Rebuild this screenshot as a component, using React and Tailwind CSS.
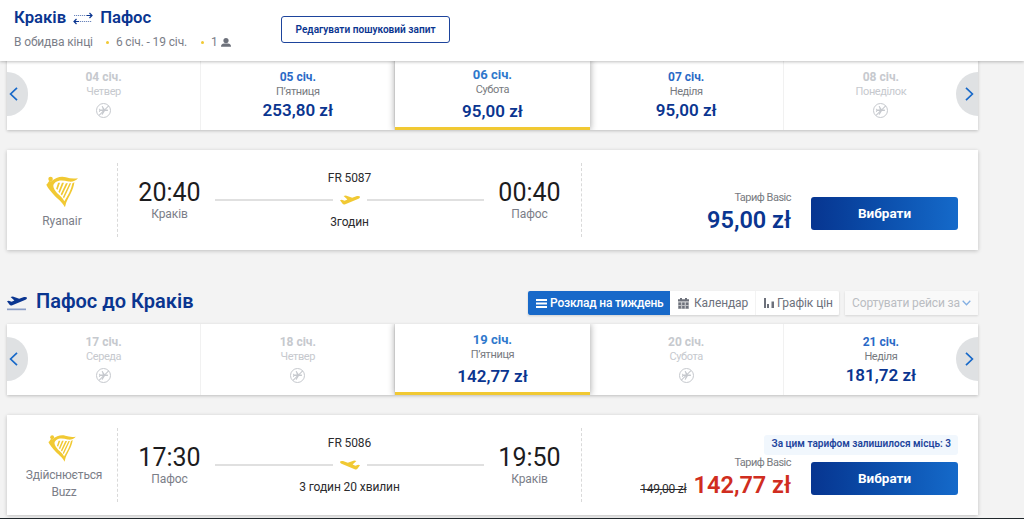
import React from 'react';
import clsx from 'clsx';
import { MdFlight } from 'react-icons/md';

const outboundDays = [
  { date: '04 січ.', day: 'Четвер' },
  { date: '05 січ.', day: 'П’ятниця', price: '253,80 zł' },
  { date: '06 січ.', day: 'Субота', price: '95,00 zł', selected: true },
  { date: '07 січ.', day: 'Неділя', price: '95,00 zł' },
  { date: '08 січ.', day: 'Понеділок' }
];

const returnDays = [
  { date: '17 січ.', day: 'Середа' },
  { date: '18 січ.', day: 'Четвер' },
  { date: '19 січ.', day: 'П’ятниця', price: '142,77 zł', selected: true },
  { date: '20 січ.', day: 'Субота' },
  { date: '21 січ.', day: 'Неділя', price: '181,72 zł' }
];

const outboundFlight = {
  carrier: ['Ryanair'],
  number: 'FR 5087',
  duration: '3годин',
  from: { time: '20:40', city: 'Краків' },
  to: { time: '00:40', city: 'Пафос' },
  price: '95,00 zł'
};

const returnFlight = {
  carrier: ['Здійснюється', 'Buzz'],
  number: 'FR 5086',
  duration: '3 годин 20 хвилин',
  from: { time: '17:30', city: 'Пафос' },
  to: { time: '19:50', city: 'Краків' },
  price: '142,77 zł',
  oldPrice: '149,00 zł',
  notice: 'За цим тарифом залишилося місць: 3',
  inbound: true
};

const HarpLogo = ({ className }) => (
  <svg viewBox="30 33 98 96" className={className} fill="#f1c933">
    <circle cx="44" cy="41" r="7" />
    <path d="M46 48 C59 37 76 31 91 36 C103 40 115 41 128 39 C121 47 110 51 99 49 C84 45 70 43 59 51 C52 57 50 63 56 73 C65 89 81 95 86 109 C96 94 107 75 111 54 L117 51 C114 75 101 92 92 113 L88 128 C81 111 63 101 51 86 C43 77 32 64 31 58 C35 57 36 50 40 47 Z" />
    <path d="M67 53 L73 53 L65 75 L61 71 Z M79 53 L85 53 L72 84 L68 80 Z M91 54 L97 54 L79 92 L75 88 Z M102 54 L107 54 L85 101 L82 96 Z" />
  </svg>
);

const planePath =
  'M0 5.2 L1.8 4.7 L4.6 5.8 L7.4 4.6 L3.6 1 L5.8 .4 L12.2 2.8 L17 1 Q19.4 .6 20 1.8 Q20.1 2.9 18.5 3.7 L5.3 9.2 Q3.4 9.8 2.6 8.8 Z';

const PlaneIcon = ({ inbound }) => (
  <svg viewBox="0 0 20 10" className={clsx('h-[10px] w-5', inbound && '-scale-x-100')} fill="#f1c933">
    <path d={planePath} />
  </svg>
);

const DepartureIcon = () => (
  <svg viewBox="0 0 20 15" className="h-[15px] w-5" fill="#0a3590">
    <path d={planePath} />
    <path d="M0 12.5h19v1.7H0z" opacity=".45" />
  </svg>
);

const ArrowIcon = ({ className, flip }) => (
  <svg
    viewBox="0 0 9 14"
    className={clsx('h-[14px] w-[9px] shrink-0', flip && '-scale-x-100', className)}
    fill="none"
    stroke="currentColor"
    strokeWidth="1.7"
  >
    <path d="M1 .8 L7.4 7 L1 13.2" />
  </svg>
);

const NoFlightIcon = () => (
  <span className="relative flex h-[15px] w-[15px] items-center justify-center rounded-full border border-[#c6c9ce] text-[#c6c9ce]">
    <MdFlight className="h-[11px] w-[11px] rotate-90" />
    <span className="absolute h-px w-[14px] -rotate-45 bg-[#c6c9ce]" />
  </span>
);

const RoundTripIcon = () => (
  <svg viewBox="0 0 20 13" className="h-[13px] w-5" fill="none" stroke="#0a3590">
    <path d="M1 3.5 H15" strokeDasharray="1.2 .8" strokeWidth="1" opacity=".6" />
    <path d="M5 9.5 H19" strokeDasharray="1.2 .8" strokeWidth="1" opacity=".6" />
    <path d="M14 3.5 H19 M16.5 1 L19 3.5 L16.5 6" strokeWidth="1.2" />
    <path d="M6 9.5 H1 M3.5 7 L1 9.5 L3.5 12" strokeWidth="1.2" />
  </svg>
);

const DayCell = ({ item }) => {
  const { date, day, price, selected } = item;

  return (
    <div
      className={clsx(
        'flex flex-col items-center bg-white',
        selected
          ? 'relative border-b-[3px] border-[#f1c933] pt-2 shadow-[0_0_7px_rgba(0,0,0,0.38)]'
          : 'border-r border-[#f1f1f1] pt-[10px] last:border-r-0'
      )}
    >
      <div
        className={clsx(
          'font-bold leading-4',
          !price && 'text-[12px] text-[#c6c9ce]',
          price && !selected && 'text-[12px] text-[#2a69c6]',
          selected && 'text-[13px] text-[#2f78cc]'
        )}
      >
        {date}
      </div>
      <div
        className={clsx(
          'text-[11px] leading-[14px] tracking-[-0.4px]',
          price ? 'text-[#777a80]' : 'text-[#c6c9ce]'
        )}
      >
        {day}
      </div>
      {price ? (
        <div className={clsx('text-[17px] font-semibold leading-5 text-[#0a3590]', selected ? 'mt-1' : 'mt-px')}>
          {price}
        </div>
      ) : (
        <div className="mt-1">
          <NoFlightIcon />
        </div>
      )}
    </div>
  );
};

const WeekCarousel = ({ days }) => (
  <div className="relative h-[71px] w-[971px] shadow-[0_1px_3px_rgba(0,0,0,0.22)]">
    <div className="grid h-full w-full grid-cols-5 overflow-hidden bg-white">
      {days.map((item) => (
        <DayCell key={item.date} item={item} />
      ))}
    </div>
    <button className="absolute left-0 top-[13px] flex h-11 w-[21px] items-center rounded-r-full bg-[#dfe1e3] text-[#1869c9]">
      <ArrowIcon flip className="ml-[2px]" />
    </button>
    <button className="absolute right-0 top-[13px] flex h-11 w-[22px] items-center justify-end rounded-l-full bg-[#dfe1e3] text-[#1869c9]">
      <ArrowIcon className="mr-1" />
    </button>
  </div>
);

const Stop = ({ stop }) => (
  <div className="flex w-[63px] flex-col items-center pt-[29px]">
    <div className="text-[25px] leading-[27px] text-[#1c1c1e]">{stop.time}</div>
    <div className="text-[12px] leading-[17px] tracking-[-0.1px] text-[#7b7e88]">{stop.city}</div>
  </div>
);

const FlightCard = ({ flight }) => (
  <div className="flex h-[100px] w-[971px] bg-white shadow-[0_1px_4px_rgba(0,0,0,0.22)]">
    <div className="flex w-[110px] flex-col items-center">
      <HarpLogo
        className={flight.carrier.length > 1 ? 'mb-[5px] mt-5 h-[27px] w-[28px]' : 'mb-[5px] mt-[26px] h-8 w-8'}
      />
      {flight.carrier.map((line) => (
        <div
          key={line}
          className={clsx(
            'text-[12px] leading-[17px] text-[#7b7e88]',
            flight.carrier.length > 1 && 'pl-1 tracking-[-0.2px]'
          )}
        >
          {line}
        </div>
      ))}
    </div>

    <div className="my-[13px] border-l border-dashed border-[#d9d9d9]" />

    <div className="flex w-[463px] pl-5">
      <Stop stop={flight.from} />
      <div className="mx-[14px] flex w-[269px] flex-col items-center pt-5 text-[12px] leading-4 tracking-[-0.1px] text-[#2b2b2e]">
        <div>{flight.number}</div>
        <div className="my-[6px] flex h-[15px] w-full items-center">
          <div className="h-[2px] flex-1 bg-[#e0e0e0]" />
          <div className="mx-[7px]">
            <PlaneIcon inbound={flight.inbound} />
          </div>
          <div className="h-[2px] flex-1 bg-[#e0e0e0]" />
        </div>
        <div className="mt-px">{flight.duration}</div>
      </div>
      <Stop stop={flight.to} />
    </div>

    <div className="my-[13px] border-l border-dashed border-[#d9d9d9]" />

    <div className="flex flex-1 flex-col items-end pr-5">
      <div className="mt-5 h-5">
        {flight.notice && (
          <div className="h-5 whitespace-nowrap rounded-[3px] bg-[#f1f7fd] px-[7px] text-[10.05px] font-semibold leading-[18px] text-[#1d449c]">
            {flight.notice}
          </div>
        )}
      </div>
      <div className="flex">
        <div className="mr-5 flex flex-col items-end">
          <div className="text-[11px] leading-4 tracking-[-0.5px] text-[#777a80]">Тариф Basic</div>
          <div className="flex items-baseline">
            {flight.oldPrice && (
              <span className="mr-[7px] text-[12px] tracking-[-0.2px] text-[#2b2b2e] line-through">
                {flight.oldPrice}
              </span>
            )}
            <span
              className={clsx(
                'text-[23.5px] font-semibold leading-7',
                flight.oldPrice ? 'text-[#d02d20]' : 'text-[#0a3590]'
              )}
            >
              {flight.price}
            </span>
          </div>
        </div>
        <button className="mt-[7px] h-[33px] w-[147px] rounded-[3px] bg-linear-to-r from-[#073590] to-[#156aca] pb-[2px] text-[13.5px] font-bold leading-4 text-white">
          Вибрати
        </button>
      </div>
    </div>
  </div>
);

const SearchHeader = () => (
  <header className="relative z-10 flex h-[61px] shrink-0 bg-white pl-[14px] shadow-[0_1px_3px_rgba(0,0,0,0.25)]">
    <div className="w-[267px] pt-2">
      <div className="flex h-5 items-center text-[16.7px] font-semibold text-[#0a3590]">
        <span>Краків</span>
        <span className="mx-[7px]">
          <RoundTripIcon />
        </span>
        <span>Пафос</span>
      </div>
      <div className="mt-[6px] flex h-4 items-center text-[12px] tracking-[-0.13px] text-[#7b7e88]">
        <span>В обидва кінці</span>
        <span className="ml-[13px] mr-[7px] h-[3px] w-[3px] rounded-full bg-[#f1c933]" />
        <span>6 січ. - 19 січ.</span>
        <span className="ml-[14px] mr-[7px] h-[3px] w-[3px] rounded-full bg-[#f1c933]" />
        <span>1</span>
        <svg viewBox="0 0 10 9" className="ml-[3px] h-[9px] w-[10px]" fill="#6d717b">
          <circle cx="5" cy="2.6" r="2.6" />
          <path d="M0 8.8 Q0 5.8 3 5.6 H7 Q10 5.8 10 8.8 Z" />
        </svg>
      </div>
    </div>
    <button className="mt-4 h-[27px] w-[169px] rounded-[3px] border border-[#1d449c] text-[10.1px] font-semibold text-[#0a3590]">
      Редагувати пошуковий запит
    </button>
  </header>
);

const ReturnToolbar = () => (
  <div className="mt-[41px] flex h-6 w-[971px] items-center">
    <DepartureIcon />
    <h2 className="-mt-1 ml-[9px] text-[20px] font-semibold leading-6 text-[#0a3590]">Пафос до Краків</h2>
    <div className="ml-auto flex h-6 items-stretch text-[12px] tracking-[-0.1px] text-[#6d717b] shadow-[0_1px_2px_rgba(0,0,0,0.15)]">
      <button className="flex w-[142px] items-center rounded-l-[2px] bg-[#1869c9] pl-2 font-medium tracking-[-0.2px] text-white">
        <svg viewBox="0 0 11 9" className="mr-[3px] h-[9px] w-[11px] shrink-0" fill="currentColor">
          <path d="M0 0h11v2H0z M0 3.5h11v2H0z M0 7h11v2H0z" />
        </svg>
        Розклад на тиждень
      </button>
      <button className="flex w-[85px] items-center bg-white pl-2">
        <svg viewBox="0 0 11 11" className="mr-[5px] h-[11px] w-[11px] shrink-0" fill="currentColor">
          <path d="M2 0h2v1.2h3V0h2v1.2h2v2.3H0V1.2h2z" />
          <path d="M0 4.2h11V11H0z" opacity=".45" />
          <path d="M.5 4.5h2.4v2.6H.5z M4.2 4.5h2.4v2.6H4.2z M8 4.5h2.4v2.6H8z M.5 8h2.4v2.5H.5z M4.2 8h2.4v2.5H4.2z M8 8h2.4v2.5H8z" />
        </svg>
        Календар
      </button>
      <button className="flex w-[84px] items-center rounded-r-[2px] border-l border-[#f3f3f3] bg-white pl-2">
        <svg viewBox="0 0 10 10" className="mr-[3px] h-[10px] w-[10px] shrink-0" fill="currentColor">
          <path d="M0 0h2v10H0z M3 6h2v4H3z M7.5 3.5H10V10H7.5z" />
        </svg>
        Графік цін
      </button>
    </div>
    <button className="ml-[6px] flex h-6 w-[133px] items-center bg-[#f9f9f9] pl-[7px] text-[12px] tracking-[-0.13px] text-[#babdc2] shadow-[0_1px_2px_rgba(0,0,0,0.12)]">
      Сортувати рейси за
      <svg viewBox="0 0 9 6" className="ml-[2px] h-[6px] w-[9px] shrink-0" fill="none" stroke="#83afe2" strokeWidth="1.3">
        <path d="M.7 .8 L4.5 4.7 L8.3 .8" />
      </svg>
    </button>
  </div>
);

export default function App() {
  return (
    <div className="flex h-[519px] w-[1024px] flex-col overflow-hidden whitespace-nowrap bg-[#f3f3f3] font-['Roboto',sans-serif]">
      <SearchHeader />
      <main className="-mt-[2px] min-h-0 flex-1 overflow-hidden pl-[7px]">
        <WeekCarousel days={outboundDays} />
        <div className="mt-5">
          <FlightCard flight={outboundFlight} />
        </div>
        <ReturnToolbar />
        <div className="mt-[9px]">
          <WeekCarousel days={returnDays} />
        </div>
        <div className="mt-5">
          <FlightCard flight={returnFlight} />
        </div>
      </main>
      <footer className="h-px shrink-0 bg-[#20272b]" />
    </div>
  );
}
